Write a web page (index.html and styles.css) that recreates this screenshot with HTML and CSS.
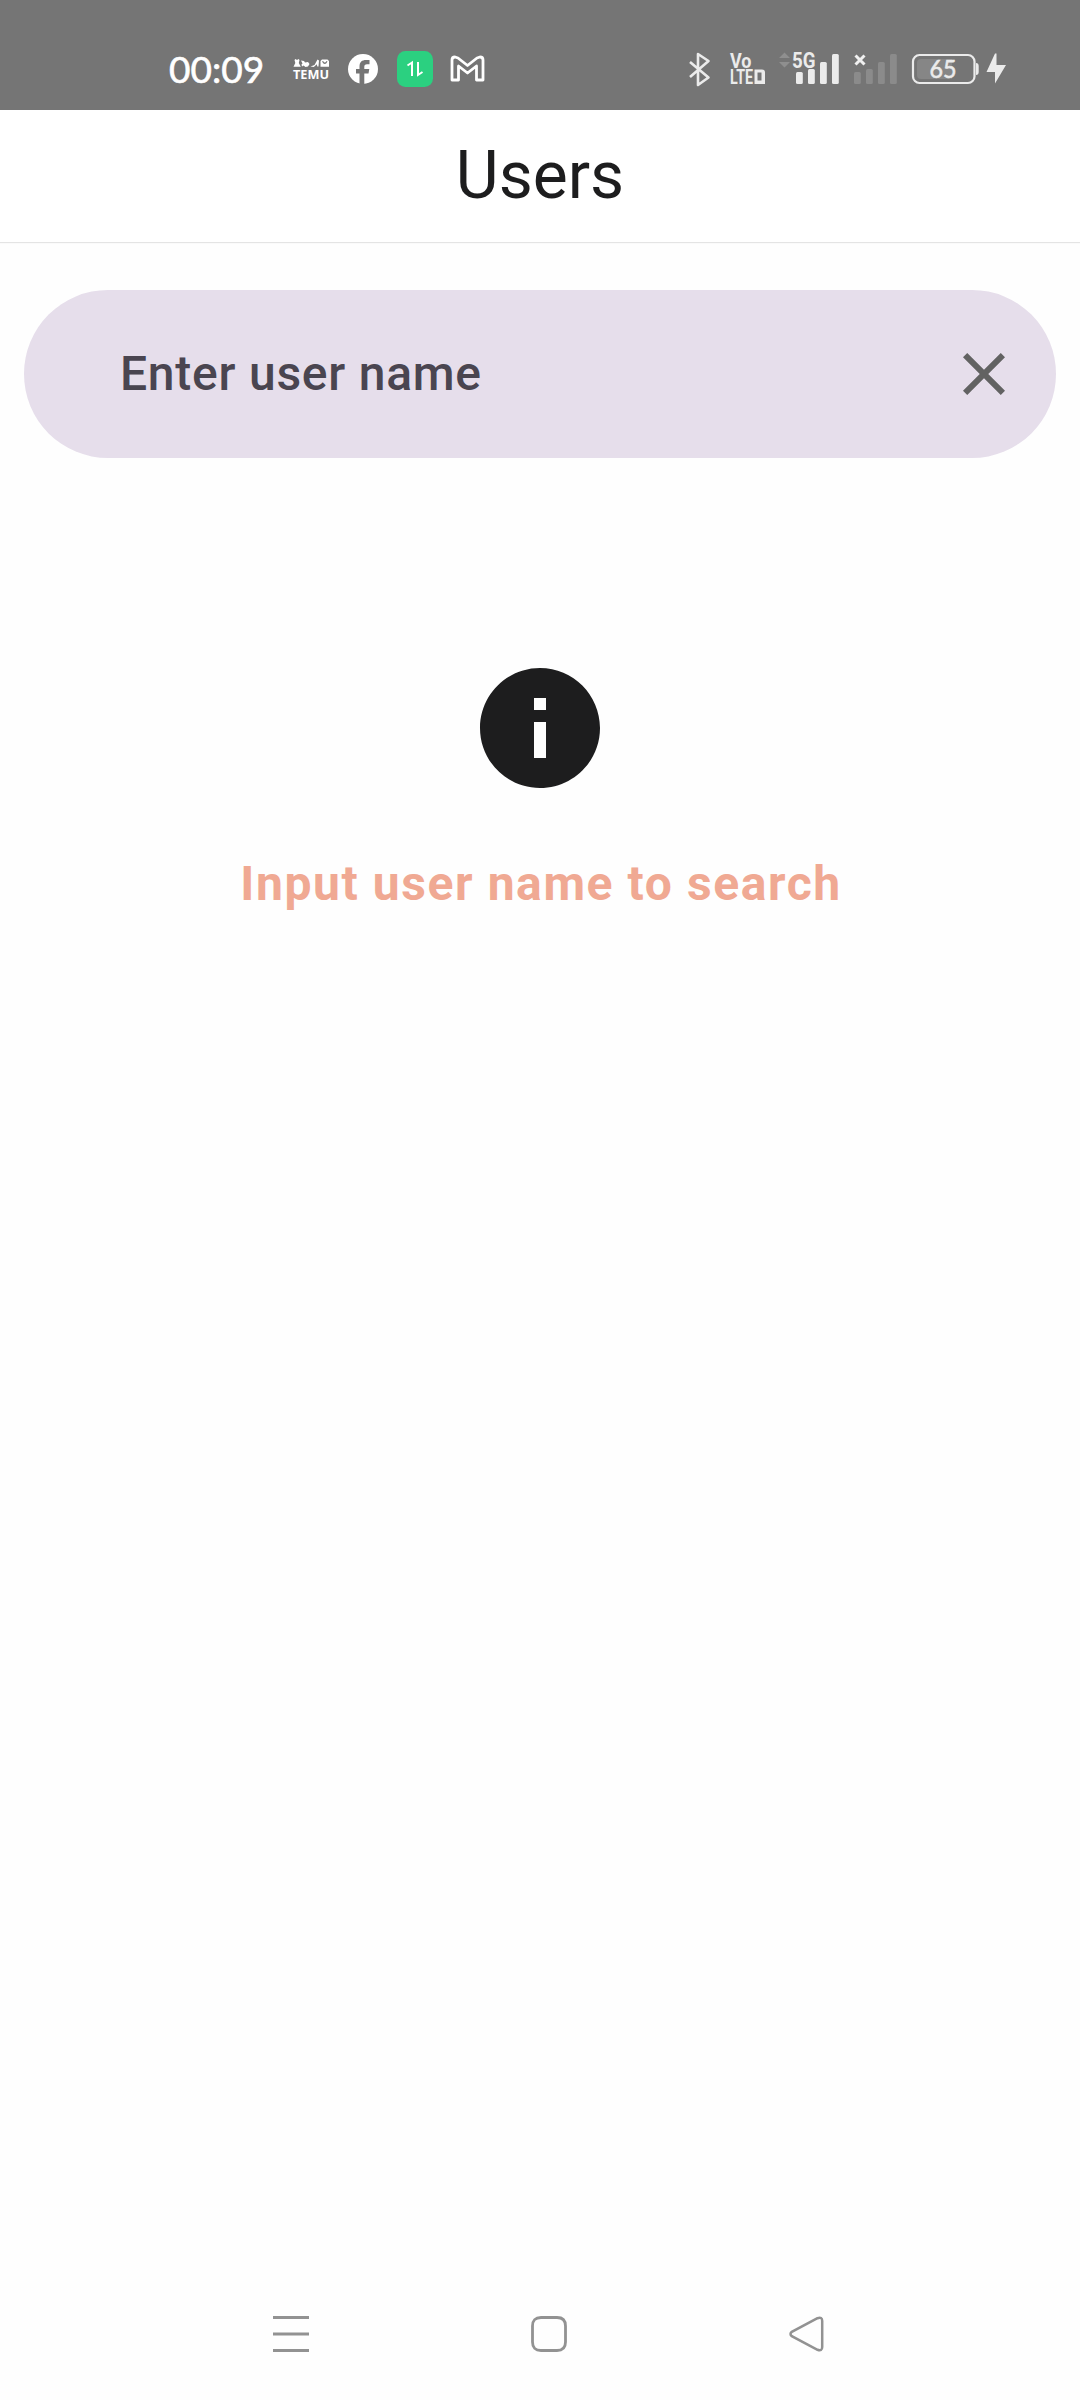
FILE: index.html
```html
<!DOCTYPE html>
<html lang="en">
<head>
<meta charset="utf-8">
<title>Users</title>
<link rel="stylesheet" href="styles.css">
</head>
<body>
<div class="screen">
  <div class="status-bar">
    <div class="status-group">
      <span class="clock">00:09</span>
      <svg class="icon" width="36" height="60" viewBox="293 40 36 60">
        <g fill="#fff">
          <path d="M294.500 60l1-1 1.500 1 1.500-1 1 1-.7 3 2 3.800h-7.300l1.800-3.800zM301 60.500l3 .5 1 1.500 3-.5 1.500 2-1.500 2.500-2.500.5-2-1.500-1.500 1-.5-2 1-1zM310.500 66.500l4-1.500 3-5.500 1.500 1-.5 6h-1.200l-.5-2.300-3 2.800z"/>
          <path fill-rule="evenodd" d="M322 59.500h5.500l1.500 1.500v5.800h-8.500V61zM322 61.500q2.800 5 5.500 0l-1-.5q-1.700 3-3.400 0z"/>
        </g>
        <text class="temu" x="293" y="78.500" textLength="36" lengthAdjust="spacingAndGlyphs">TEMU</text>
      </svg>
      <svg class="icon" width="30" height="60" viewBox="348 40 30 60">
        <circle cx="363" cy="69" r="15" fill="#fff"/>
        <path d="M359.500 85V73.500H356v-4.500h3.500v-2.500c0-4.500 2.500-6.500 6.500-6.500h3.500v4.200h-2.500c-2 0-2.700 1-2.700 2.500v2.300h5l-.8 4.500h-4.200V85z" fill="#757575"/>
      </svg>
      <svg class="icon" width="36" height="60" viewBox="397 40 36 60">
        <rect x="397" y="51" width="36" height="36" rx="8.500" fill="#2bd080"/>
        <path d="M407.500 65.500l4.500-3V76M418 62v13l4.500-3" fill="none" stroke="#fff" stroke-width="2"/>
      </svg>
      <svg class="icon" width="34" height="60" viewBox="452 40 34 60">
        <path d="M452 80V60Q452 57 455 57L458 58 467.500 65.500 477 58 480 57Q483 57 483 60V80H476.500V66L467.500 73 458.500 66V80Z" fill="none" stroke="#fff" stroke-width="2.800" stroke-linejoin="round"/>
      </svg>
    </div>
    <div class="status-group status-right">
      <svg class="icon" width="31" height="60" viewBox="684 40 31 60">
        <path d="M690 62l18.500 15.500-10.500 7.500V54l10.500 7L690 77" fill="none" stroke="#ebebeb" stroke-width="2.600" stroke-linejoin="round"/>
      </svg>
      <svg class="icon" width="35" height="60" viewBox="730 40 35 60">
        <text class="volte"><tspan x="730" y="68" textLength="21.500" lengthAdjust="spacingAndGlyphs">Vo</tspan><tspan x="730" y="84" textLength="23" lengthAdjust="spacingAndGlyphs">LTE</tspan></text>
        <path d="M754.500 69.500h7.500q3 0 3 3V84h-10.500zM757.500 72.500v8h4v-8z" fill="#ebebeb" fill-rule="evenodd"/>
      </svg>
      <svg class="icon" width="59" height="60" viewBox="780 40 59 60">
        <path d="M779 58l5.500-5.500 5.500 5.500zM779 62h11l-5.500 5.500z" fill="#8f8f8f"/>
        <text class="network" x="792" y="67.500" textLength="23.500" lengthAdjust="spacingAndGlyphs">5G</text>
        <g fill="#ebebeb"><rect x="796" y="72" width="6.800" height="12" rx="1.500"/><rect x="808" y="69" width="6.800" height="15" rx="1.500"/><rect x="820" y="62" width="6.800" height="22" rx="1.500"/><rect x="832" y="54" width="6.800" height="30" rx="1.500"/></g>
      </svg>
      <svg class="icon" width="43" height="60" viewBox="854 40 43 60">
        <g fill="#8b8b8b"><rect x="854" y="72" width="6.800" height="12" rx="1.500"/><rect x="866" y="69" width="6.800" height="15" rx="1.500"/><rect x="878" y="62" width="6.800" height="22" rx="1.500"/><rect x="890" y="54" width="6.800" height="30" rx="1.500"/></g>
        <path d="M855.500 55.500l9 9M864.500 55.500l-9 9" stroke="#f0f0f0" stroke-width="3"/>
      </svg>
      <svg class="icon" width="94" height="60" viewBox="912 40 94 60">
        <path d="M921 59h31v20h-31q-4 0-4-4V63q0-4 4-4z" fill="#868686"/>
        <rect x="913" y="55" width="61.500" height="28" rx="6.500" fill="none" stroke="#ebebeb" stroke-width="2.200"/>
        <path d="M976 63q2.700 0 2.700 3v6q0 3-2.700 3z" fill="#ebebeb"/>
        <text class="battery" x="929.500" y="78" textLength="27" lengthAdjust="spacingAndGlyphs">65</text>
        <path d="M995 53.500L986.500 72h8.500v11.500L1006 65h-9.500V53.500z" fill="#ebebeb"/>
      </svg>
    </div>
  </div>

  <header class="app-bar"><h1 class="title">Users</h1></header>

  <main class="content">
    <div class="search">
      <span class="placeholder">Enter user name</span>
      <svg width="72" height="72" viewBox="0 0 24 24"><path fill="#626262" d="M19 6.410L17.590 5 12 10.590 6.410 5 5 6.410 10.590 12 5 17.590 6.410 19 12 13.410 17.590 19 19 17.590 13.410 12z"/></svg>
    </div>
    <div class="empty">
      <svg width="144" height="144" viewBox="0 0 24 24"><path fill="#1d1d1e" d="M12 2C6.480 2 2 6.480 2 12s4.480 10 10 10 10-4.480 10-10S17.520 2 12 2zm1 15h-2v-6h2v6zm0-8h-2V7h2v2z"/></svg>
      <p class="hint">Input user name to search</p>
    </div>
  </main>

  <nav class="nav-bar">
    <svg width="36" height="36" viewBox="0 0 36 36"><path d="M0 1.500h36M0 18h36M0 34.500h36" stroke="#929292" stroke-width="3"/></svg>
    <svg width="36" height="36" viewBox="0 0 36 36"><path d="M10 1.500H26Q34.500 1.500 34.500 10V26Q34.500 34.500 26 34.500H10Q1.500 34.500 1.500 26V10Q1.500 1.500 10 1.500Z" fill="none" stroke="#929292" stroke-width="2.800"/></svg>
    <svg width="36" height="36" viewBox="0 0 36 36"><path d="M28.500 2.200L2.800 15.800Q.2 18 2.800 20.200L28.500 33.800Q33.200 35.500 33.200 31V5Q33.200.5 28.500 2.200Z" fill="none" stroke="#929292" stroke-width="2.500"/></svg>
  </nav>
</div>
</body>
</html>
```
FILE: styles.css
```css
* { box-sizing: border-box; }

body {
  margin: 0;
  background: #fefefe;
  font-family: Roboto, sans-serif;
}

svg { display: block; flex: none; }

.screen {
  display: flex;
  flex-direction: column;
  width: 1080px;
  height: 2400px;
}

.status-bar {
  display: flex;
  justify-content: space-between;
  height: 110px;
  padding: 40px 74px 0 169px;
  background: #757575;
}

.status-group { display: flex; gap: 19px; height: 60px; }
.status-right { gap: 15px; }
.icon { overflow: visible; }

.clock {
  width: 105px;
  color: #fff;
  font: 400 37px/57px Lato, sans-serif;
  -webkit-text-stroke: 0.6px #fff;
  white-space: nowrap;
}

.temu { font: 700 12.500px "Open Sans", sans-serif; fill: #fff; }
.volte { font: 700 20px Roboto, sans-serif; fill: #ebebeb; }
.network { font: 700 22px Roboto, sans-serif; fill: #ebebeb; }
.battery { font: 400 25px Lato, sans-serif; fill: #ebebeb; stroke: #ebebeb; stroke-width: 0.6px; }

.app-bar {
  display: flex;
  align-items: center;
  justify-content: center;
  height: 132px;
  background: #fff;
  box-shadow: 0 1px 1px #e4e4e4;
}

.title {
  margin: 0;
  color: #1d1d1e;
  font-size: 66px;
  line-height: 84px;
  font-weight: 400;
}

.content { flex: 1; padding: 48px 24px 0; }

.search {
  display: flex;
  align-items: center;
  justify-content: space-between;
  height: 168px;
  padding: 0 36px 0 96px;
  border-radius: 84px;
  background: #e6deeb;
}

.placeholder {
  padding-bottom: 2px;
  color: #4a4550;
  font-size: 48px;
  font-weight: 500;
  letter-spacing: 0.750px;
}

.empty {
  display: flex;
  flex-direction: column;
  align-items: center;
  gap: 48px;
  padding-top: 198px;
}

.hint {
  margin: 0;
  padding-left: 2px;
  color: #f0a993;
  font-size: 48px;
  line-height: 72px;
  font-weight: 700;
  letter-spacing: 1.580px;
}

.nav-bar {
  display: flex;
  justify-content: space-between;
  height: 84px;
  padding: 0 255px 0 272.500px;
}
```
